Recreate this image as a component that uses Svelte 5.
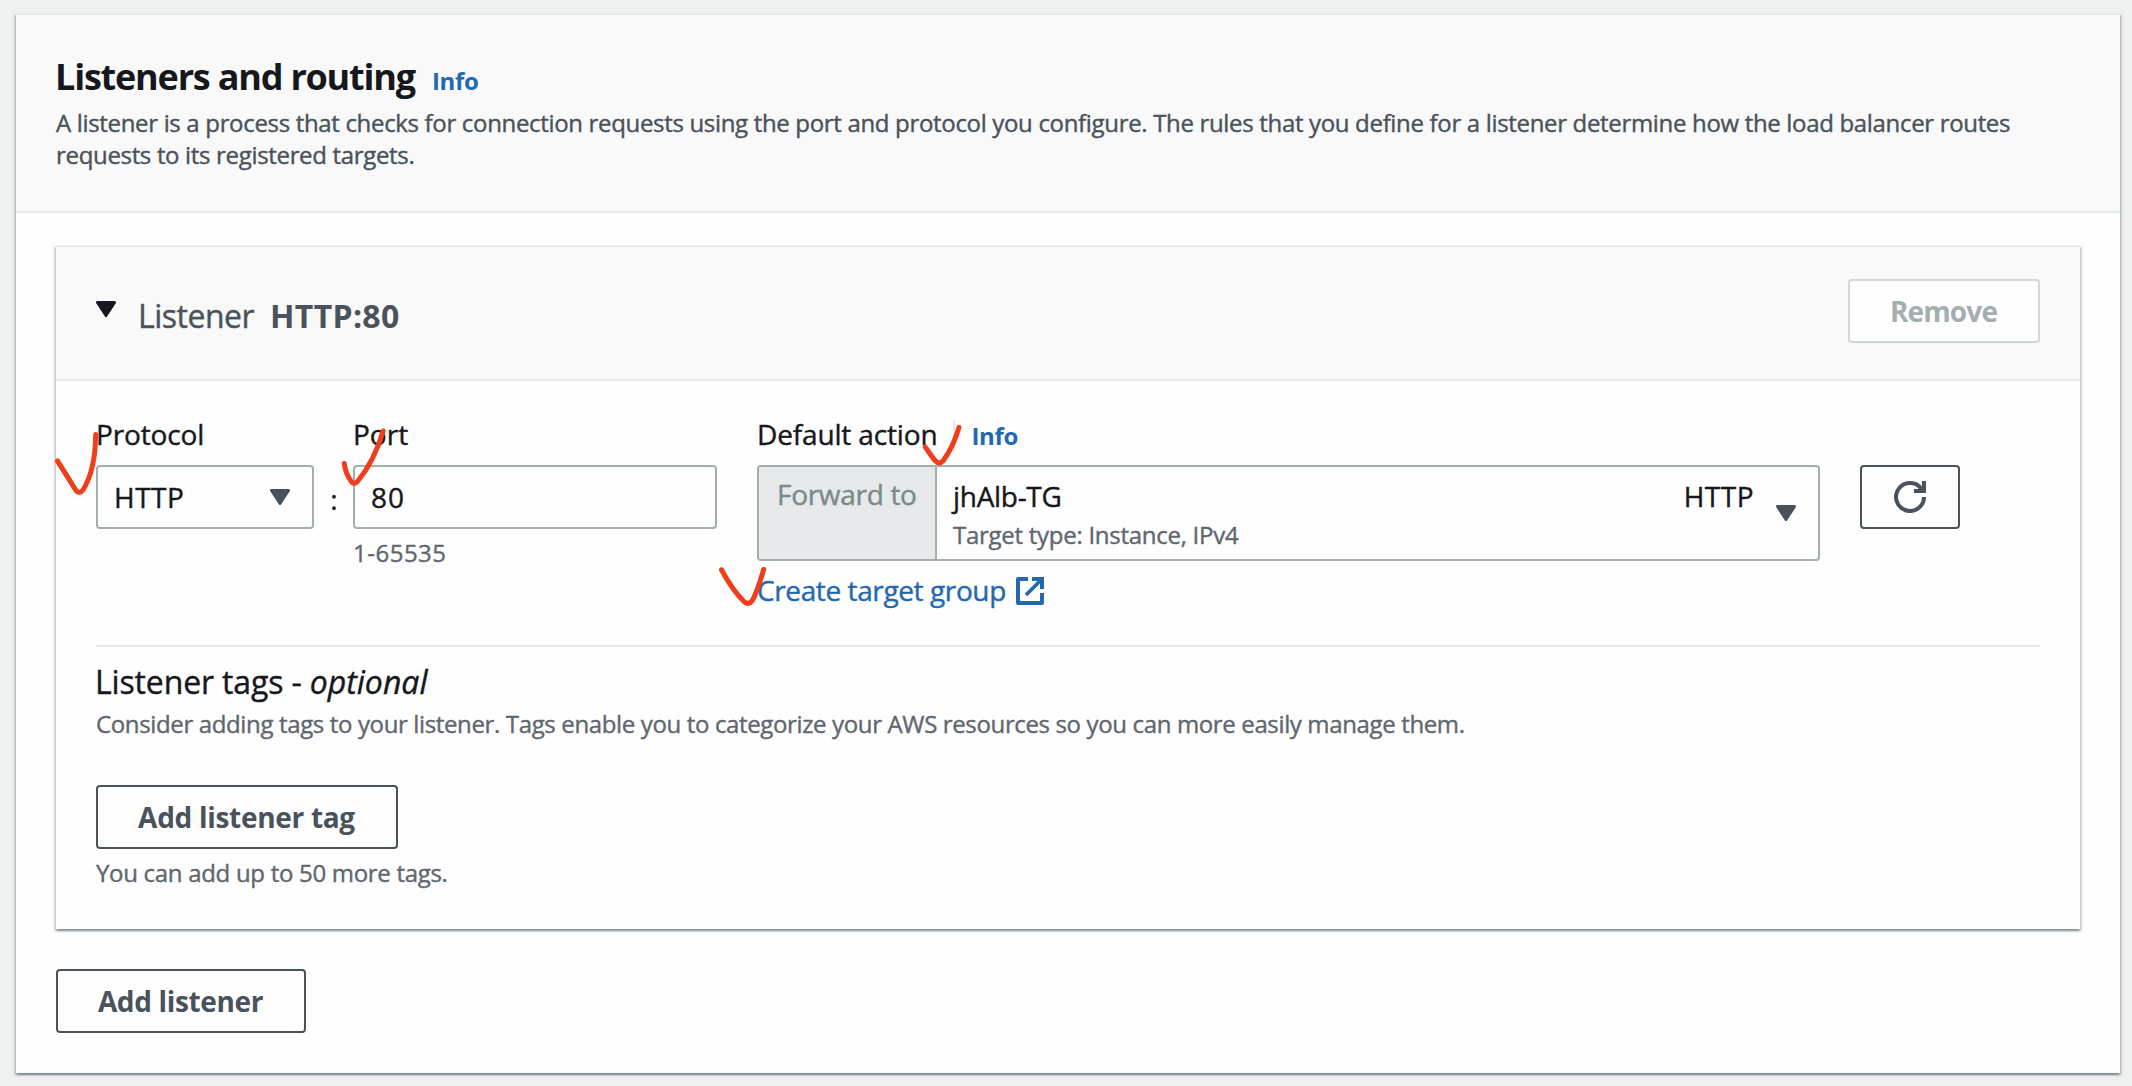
<script lang="ts">
  let protocol = $state('HTTP');
  let port = $state('80');
  const targetGroup = { name: 'jhAlb-TG', detail: 'Target type: Instance, IPv4', protocol: 'HTTP' };
  const checkmarks = [
    'M57.4 461C64 471 71 482.500 76 490.500Q79.500 494.500 83 490C91 477 95.500 460 95.700 434.500',
    'M344.300 463.500C345 471 348.500 478 352 482.500Q354.500 484.500 357.500 481.500C367 470 377 452 383.200 431',
    'M925.200 447C929 452 932 457.500 936 461.500Q939.500 464.500 943 461C949 453 955 441 959 427.300',
    'M721.500 569.800C728 582 736 594 744.500 602Q748.500 605 752 601C757 593 760.500 580 763.700 569.300'
  ];
</script>

{#snippet triangle(cls: string)}
  <svg class="triangle {cls}" viewBox="0 0 20 16" aria-hidden="true">
    <path d="M1.500 1.500H18.500L10 14.500Z" />
  </svg>
{/snippet}

<main class="page">
  <section class="panel">
    <header class="panel-header">
      <div class="title-row">
        <h1>Listeners and routing</h1>
        <a class="info" href="#info">Info</a>
      </div>
      <p class="intro">
        A listener is a process that checks for connection requests using the port and protocol you configure. The rules that you define for a listener determine how the load balancer routes requests to its registered targets.
      </p>
    </header>

    <div class="panel-body">
      <article class="card">
        <header class="card-header">
          {@render triangle('toggle')}
          <h2><span class="kind">Listener</span><strong>{protocol}:{port}</strong></h2>
          <button class="btn remove" disabled>Remove</button>
        </header>

        <div class="card-body">
          <div class="fields">
            <div class="field protocol">
              <div class="label">Protocol</div>
              <div class="select">
                <span class="value">{protocol}</span>
                {@render triangle('')}
              </div>
            </div>
            <div class="colon">:</div>
            <div class="field port">
              <div class="label">Port</div>
              <div class="input">{port}</div>
              <div class="hint">1-65535</div>
            </div>
            <div class="field action">
              <div class="label action-label">
                <span>Default action</span>
                <a class="info" href="#action-info">Info</a>
              </div>
              <div class="combo">
                <div class="prefix">Forward to</div>
                <div class="target">
                  <div class="target-text">
                    <div class="target-name">{targetGroup.name}</div>
                    <div class="target-detail">{targetGroup.detail}</div>
                  </div>
                  <span class="target-protocol">{targetGroup.protocol}</span>
                  {@render triangle('target-arrow')}
                </div>
              </div>
              <a class="create" href="#create">
                <span>Create target group</span>
                <svg viewBox="0 0 28 28" aria-hidden="true">
                  <path d="M12 2H2V26H26V16" stroke-width="4" stroke-linejoin="round" />
                  <path d="M16 2H26V12" stroke-width="4" />
                  <path d="M10 18L25 3" stroke-width="3.800" />
                </svg>
              </a>
            </div>
            <button class="btn refresh" aria-label="Refresh">
              <svg viewBox="0 0 32 32" aria-hidden="true">
                <path d="M30 16A14 14 0 1 1 27.500 8" />
                <path d="M30 0V10H20" />
              </svg>
            </button>
          </div>

          <div class="tags">
            <h3>Listener tags - <em>optional</em></h3>
            <p class="tags-text">Consider adding tags to your listener. Tags enable you to categorize your AWS resources so you can more easily manage them.</p>
            <button class="btn add-tag">Add listener tag</button>
            <p class="limit">You can add up to 50 more tags.</p>
          </div>
        </div>
      </article>

      <button class="btn add-listener">Add listener</button>
    </div>
  </section>

  <!-- hand-drawn checkmarks over the form -->
  <svg class="annotations" viewBox="0 0 2132 1086" aria-hidden="true">
    {#each checkmarks as d}
      <path {d} />
    {/each}
  </svg>
</main>

<style>
  :global(body) {
    background: #eff1f1;
  }
  .page {
    position: relative;
    box-sizing: border-box;
    width: 2132px;
    height: 1086px;
    padding: 13px 12px 13px 16px;
    background: #eff1f1;
    color: #16181d;
    font: 28px/36px 'Open Sans', 'Noto Sans', sans-serif;
    -webkit-text-stroke: 0.400px;
  }
  .page :global(*) {
    box-sizing: border-box;
  }
  h1, h2, h3, p {
    margin: 0;
    font-weight: 400;
  }
  a {
    color: #2268b2;
    text-decoration: none;
  }
  svg {
    display: block;
  }
  .panel, .card {
    background: #fefefe;
    border-top: 2px solid #e5eaea;
    box-shadow:
      0 2px 2px 0 rgba(0, 28, 36, 0.3),
      2px 2px 2px 0 rgba(0, 28, 36, 0.15),
      -2px 2px 2px 0 rgba(0, 28, 36, 0.15);
  }
  .panel {
    height: 1060px;
  }
  .panel-header {
    height: 198px;
    padding: 40px 40px 0;
    background: #f9f9f9;
    border-bottom: 2px solid #e5eaea;
  }
  .title-row {
    display: flex;
    align-items: baseline;
    gap: 17px;
    height: 44px;
    margin-left: -1px;
  }
  h1 {
    font-size: 36px;
    font-weight: 700;
    line-height: 44px;
    letter-spacing: -1.200px;
    -webkit-text-stroke: 0;
  }
  .info {
    font-size: 24px;
    font-weight: 700;
    line-height: 32px;
    letter-spacing: -0.300px;
    -webkit-text-stroke: 0;
  }
  .intro {
    margin-top: 8px;
    color: #4a525b;
    font-size: 24px;
    line-height: 32px;
    letter-spacing: -0.328px;
  }
  .panel-body {
    padding: 32px 40px 40px;
  }
  .card {
    height: 684px;
  }
  .card-header {
    display: flex;
    align-items: flex-start;
    height: 134px;
    padding: 32px 40px 0;
    background: #f9f9f9;
    border-bottom: 2px solid #e5eaea;
  }
  .triangle {
    flex: none;
    width: 20px;
    height: 16px;
    fill: #4a525b;
    stroke: #4a525b;
    stroke-width: 3px;
    stroke-linejoin: round;
  }
  .toggle {
    margin-top: 22px;
    fill: #16181d;
    stroke: #16181d;
  }
  h2 {
    flex: 1;
    display: flex;
    gap: 16px;
    margin: 15px 0 0 22px;
    color: #4a525b;
    font-size: 32px;
    line-height: 44px;
  }
  .kind {
    letter-spacing: -0.500px;
  }
  h2 strong {
    letter-spacing: 0.300px;
    -webkit-text-stroke: 0;
  }
  .btn {
    display: block;
    height: 64px;
    padding: 0;
    color: #4a525b;
    background: #fefefe;
    border: 2px solid #4a525b;
    border-radius: 4px;
    font: 700 28px/58px 'Open Sans', 'Noto Sans', sans-serif;
    text-align: center;
    -webkit-text-stroke: 0;
  }
  .remove {
    width: 192px;
    padding-right: 1px;
    color: #a2afaf;
    border-color: #d0d7d7;
    letter-spacing: -0.850px;
  }
  .card-body {
    padding: 35px 40px 40px;
  }
  .fields {
    display: flex;
    height: 231px;
    border-bottom: 2px solid #e5eaea;
  }
  .protocol {
    width: 218px;
  }
  .colon {
    width: 39px;
    padding: 65px 0 0 1px;
    text-align: center;
  }
  .port {
    width: 364px;
  }
  .action {
    width: 1063px;
    margin-left: 40px;
  }
  .label {
    height: 36px;
    margin-bottom: 13px;
  }
  .protocol .label {
    letter-spacing: -0.150px;
  }
  .select, .input {
    display: flex;
    align-items: center;
    height: 64px;
    border: 2px solid #a2afaf;
    border-radius: 4px;
  }
  .select {
    justify-content: space-between;
    padding: 0 22px 0 16px;
  }
  .value {
    letter-spacing: 0.500px;
  }
  .target-protocol {
    letter-spacing: 0.500px;
  }
  .input {
    padding: 0 16px;
    letter-spacing: 1px;
  }
  .hint {
    margin-top: 8px;
    color: #5f6770;
    font-size: 24px;
    line-height: 32px;
    letter-spacing: 0.500px;
  }
  .action-label {
    display: flex;
    align-items: baseline;
    letter-spacing: -0.150px;
  }
  .action-label .info {
    margin-left: 16px;
    padding-left: 16px;
    border-left: 2px solid #e5eaea;
  }
  .combo {
    display: flex;
    height: 96px;
    border: 2px solid #a2afaf;
    border-radius: 4px;
  }
  .prefix {
    width: 178px;
    padding: 9px 0 0 18px;
    color: #7b8989;
    background: #e6eaea;
    border-right: 2px solid #a2afaf;
    border-radius: 2px 0 0 2px;
    letter-spacing: -0.300px;
  }
  .target {
    flex: 1;
    display: flex;
    padding: 11px 22px 0 16px;
  }
  .target-text {
    flex: 1;
  }
  .target-name {
    letter-spacing: -0.300px;
  }
  .target-detail {
    margin-top: 5px;
    color: #5f6770;
    font-size: 24px;
    line-height: 32px;
    letter-spacing: -0.270px;
  }
  .target-arrow {
    margin: 27px 0 0 22px;
  }
  .create {
    display: flex;
    margin: 11px 0 0;
    letter-spacing: -0.390px;
  }
  .create svg {
    width: 28px;
    height: 28px;
    margin: 5px 0 0 10px;
    fill: none;
    stroke: #2268b2;
  }
  .refresh {
    display: flex;
    align-items: center;
    justify-content: center;
    width: 100px;
    margin: 49px 0 0 40px;
  }
  .refresh svg {
    width: 32px;
    height: 32px;
    fill: none;
    stroke: #4a525b;
    stroke-width: 4px;
  }
  h3 {
    margin: 13px 0 0 -1px;
    font-size: 32px;
    line-height: 44px;
    letter-spacing: -0.150px;
  }
  h3 em {
    letter-spacing: 0;
  }
  .tags-text, .limit {
    color: #5f6770;
    font-size: 24px;
    line-height: 32px;
  }
  .tags-text {
    margin-top: 4px;
    letter-spacing: -0.360px;
  }
  .add-tag {
    width: 302px;
    margin-top: 45px;
    padding-right: 1px;
    letter-spacing: -0.300px;
  }
  .limit {
    margin-top: 8px;
    letter-spacing: -0.300px;
  }
  .add-listener {
    width: 250px;
    margin-top: 40px;
    padding-right: 1px;
    letter-spacing: -0.350px;
  }
  .annotations {
    position: absolute;
    inset: 0;
    width: 2132px;
    height: 1086px;
    fill: none;
    stroke: #ef3e1b;
    stroke-width: 5px;
    stroke-linecap: round;
    stroke-linejoin: round;
    pointer-events: none;
  }
</style>
